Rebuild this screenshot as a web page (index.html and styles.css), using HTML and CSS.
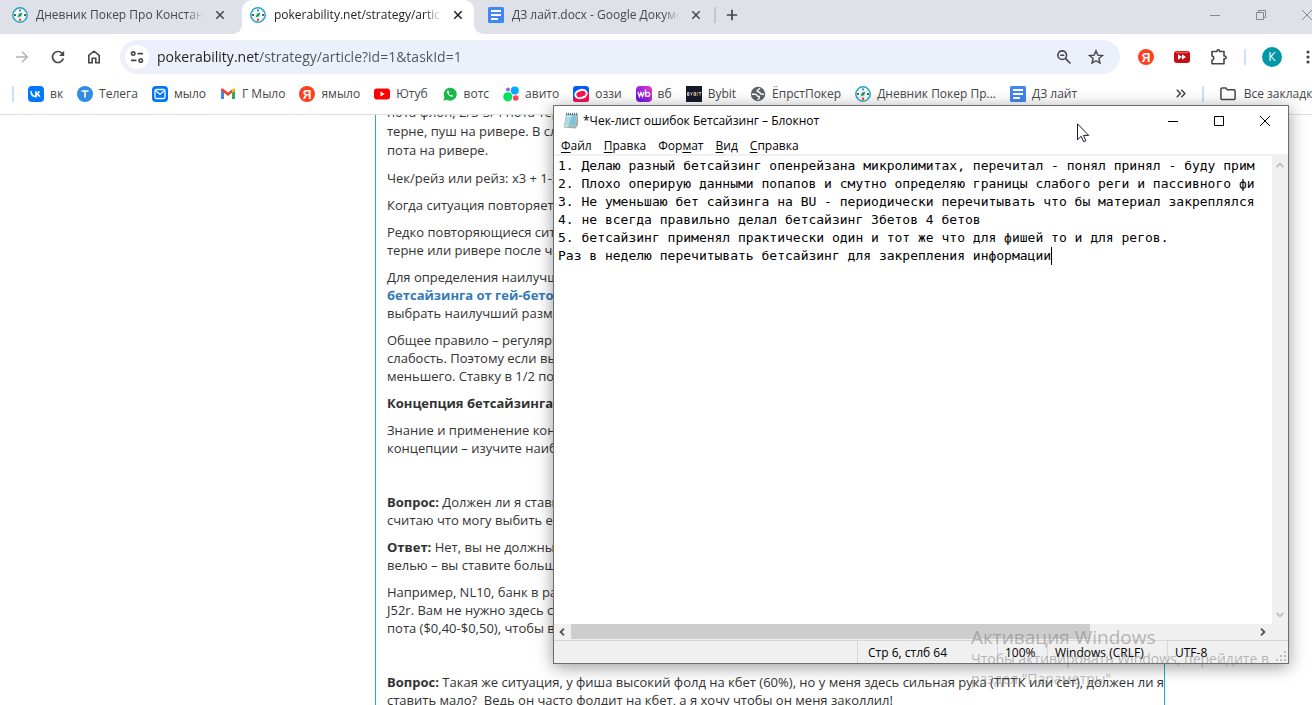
FILE: index.html
```html
<!DOCTYPE html>
<html lang="ru">
<head>
<meta charset="utf-8">
<title>pokerability.net</title>
<link rel="stylesheet" href="styles.css">
</head>
<body>
<svg class="defs" aria-hidden="true">
  <symbol id="i-poker" viewBox="0 0 16 16"><circle cx="8" cy="8" r="7.2" fill="#fff" stroke="#25a5be" stroke-width="1.5"/><path d="M2.200 8h1.600M12.200 8h1.600" stroke="#333" stroke-width="1.8"/><circle cx="8" cy="3.400" r="1.100" fill="#5570d8"/><circle cx="8" cy="12.700" r="1.300" fill="#e8453c"/><path d="M3.600 4.200l1 1M12.400 4.200l-1 1M3.600 11.800l1-1M12.400 11.800l-1-1" stroke="#7cc7d5"/><circle cx="8" cy="8" r="2.800" fill="#c6ecd9"/><path d="M5.600 10.400L7 7l3.400-1.400L9 9z" fill="#1a9a63"/><circle cx="8" cy="8" r=".8" fill="#176"/></symbol>
  <symbol id="i-doc" viewBox="0 0 16 16"><rect width="16" height="16" rx="1.5" fill="#4285f4"/><path d="M3 4h10M3 8h10M3 12h7" stroke="#fff" stroke-width="1.8"/></symbol>
  <symbol id="i-x" viewBox="0 0 10 10"><path d="M1.3 1.3l7.4 7.4M8.7 1.3L1.3 8.7" stroke="currentColor" stroke-width="1.5"/></symbol>
</svg>

<div class="browser">
  <div class="tabstrip">
    <div class="tab"><svg class="fav"><use href="#i-poker"/></svg><span class="tab-title">Дневник Покер Про Константин</span><button class="tab-close" aria-label="Закрыть"><svg width="10" height="10"><use href="#i-x"/></svg></button></div>
    <div class="tab tab-active"><svg class="fav"><use href="#i-poker"/></svg><span class="tab-title">pokerability.net/strategy/article?id=1</span><button class="tab-close" aria-label="Закрыть"><svg width="10" height="10"><use href="#i-x"/></svg></button></div>
    <div class="tab tab-last"><svg class="fav"><use href="#i-doc"/></svg><span class="tab-title">ДЗ лайт.docx - Google Документы</span><button class="tab-close" aria-label="Закрыть"><svg width="10" height="10"><use href="#i-x"/></svg></button></div>
    <button class="new-tab" aria-label="Новая вкладка"><svg width="12" height="12" viewBox="0 0 12 12"><path d="M6 .8v10.4M.8 6h10.4" stroke="#454746" stroke-width="1.7"/></svg></button>
    <div class="win-buttons">
      <button aria-label="Свернуть"><svg width="10" height="10" viewBox="0 0 10 10"><path d="M0 5.5h10" stroke="#858a90"/></svg></button>
      <button aria-label="Восстановить"><svg width="10" height="10" viewBox="0 0 10 10"><path d="M.5 2.5h7v7h-7zM2.500 2.500v-2h7v7h-2" fill="none" stroke="#858a90"/></svg></button>
      <button aria-label="Закрыть окно"><svg width="10" height="10" viewBox="0 0 10 10"><path d="M0 0l10 10M10 0L0 10" stroke="#858a90"/></svg></button>
    </div>
  </div>

  <div class="toolbar">
    <button aria-label="Вперёд"><svg width="16" height="16" viewBox="0 0 16 16"><path d="M2 8h11M8 2.700L13.300 8 8 13.300" fill="none" stroke="#b0b2b5" stroke-width="1.500"/></svg></button>
    <button aria-label="Обновить"><svg width="16" height="16" viewBox="0 0 16 16"><path d="M13.300 9.500A5.500 5.500 0 1 1 12 4.200L13.500 6" fill="none" stroke="#454746" stroke-width="1.700"/><path d="M14.200 1.800v5.100H9.100z" fill="#454746"/></svg></button>
    <button aria-label="Главная"><svg width="16" height="16" viewBox="0 0 16 16"><path d="M2.800 6.300L8 2.200l5.200 4.100v7.500H9.800V9.200H6.200v4.600H2.800z" fill="none" stroke="#454746" stroke-width="1.600"/></svg></button>
    <div class="omnibox">
      <button class="site-info" aria-label="Сведения о сайте"><svg width="14" height="14" viewBox="0 0 14 14" fill="none" stroke="#454746" stroke-width="1.600"><circle cx="3.200" cy="3.600" r="1.700"/><path d="M7.500 3.600H13M1 10.400h5.500"/><circle cx="10.800" cy="10.400" r="1.700"/></svg></button>
      <input class="url" type="text" aria-label="Адрес" value="pokerability.net/strategy/article?id=1&amp;taskId=1">
      <button aria-label="Масштаб"><svg width="16" height="16" viewBox="0 0 16 16" fill="none" stroke="#454746" stroke-width="1.600"><circle cx="6.200" cy="6.200" r="4.300"/><path d="M9.400 9.400L14.500 14.500M4.200 6.200h4"/></svg></button>
      <button aria-label="В закладки"><svg width="16" height="16" viewBox="0 0 16 16"><path d="M8 1.800l1.800 4.300 4.700.4-3.600 3 1.100 4.600L8 11.700l-4 2.400 1.100-4.600-3.600-3 4.700-.4z" fill="none" stroke="#454746" stroke-width="1.400"/></svg></button>
    </div>
    <button aria-label="Яндекс"><svg width="16" height="16" viewBox="0 0 16 16"><circle cx="8" cy="8" r="8" fill="#fc3f1d"/><text class="ya" x="8" y="12.500" text-anchor="middle">Я</text></svg></button>
    <button aria-label="Ускорение"><svg width="16" height="14" viewBox="0 0 16 14"><rect x="0" y="1" width="16" height="12" rx="3" fill="#c90d16"/><path d="M2 2.500h12" stroke="#ef5a5f" stroke-width="1.500"/><path d="M4 4.200L8 7 4 9.800zM8 4.200L12 7 8 9.800z" fill="#fff"/></svg></button>
    <button aria-label="Расширения"><svg width="18" height="18" viewBox="0 0 18 18"><path d="M3 3.500h5V3a1.300 1.300 0 0 1 2.600 0v.5H15V8h.700a1.400 1.400 0 0 1 0 2.800H15v5H3v-3.600c2.400-.3 2.400-4 0-4.300z" fill="none" stroke="#454746" stroke-width="1.600" stroke-linejoin="round"/></svg></button>
    <span class="sep"></span>
    <button aria-label="Профиль"><span class="avatar">К</span></button>
    <button aria-label="Меню"><svg width="4" height="14" viewBox="0 0 4 14" fill="#454746"><circle cx="2" cy="2" r="1.600"/><circle cx="2" cy="7" r="1.600"/><circle cx="2" cy="12" r="1.600"/></svg></button>
  </div>

  <nav class="bookmarks">
    <span class="sep"></span>
    <a href="#"><svg class="fav" viewBox="0 0 16 16"><rect width="16" height="16" rx="4" fill="#07f"/><path d="M3 5.300c.2 3.300 1.900 5.400 5 5.400V5.300M8 8.200c1.700-.2 2.700-1.200 3.300-2.900M8 8c1.900.2 3.200 1.200 3.700 2.800" fill="none" stroke="#fff" stroke-width="1.700"/></svg>вк</a>
    <a href="#"><svg class="fav" viewBox="0 0 16 16"><circle cx="8" cy="8" r="8" fill="#2f8de4"/><path d="M4.500 5h7M8 5v6.500" stroke="#fff" stroke-width="1.600"/></svg>Телега</a>
    <a href="#"><svg class="fav" viewBox="0 0 16 16"><rect width="16" height="16" rx="4" fill="#07f"/><rect x="3" y="3.500" width="10" height="9" rx="1.500" fill="none" stroke="#fff" stroke-width="1.300"/><path d="M4 5l4 3.500L12 5" fill="none" stroke="#fff" stroke-width="1.300"/></svg>мыло</a>
    <a href="#"><svg class="fav" viewBox="0 0 16 16"><path d="M1 13V4l3 2.200V13z" fill="#4285f4"/><path d="M12 13V6.200L15 4v9z" fill="#34a853"/><path d="M1 4.500V3.600C1 2.600 2.300 2 3.200 2.800L8 6.500l4-3v3.300L8 9.900 4 6.800z" fill="#ea4335"/><path d="M12 3.500l1-.8c1-.7 2 0 2 .9v1L12 7z" fill="#fbbc04"/></svg>Г Мыло</a>
    <a href="#"><svg class="fav" viewBox="0 0 16 16"><circle cx="8" cy="8" r="8" fill="#fc3f1d"/><text class="ya" x="8" y="12.500" text-anchor="middle">Я</text></svg>ямыло</a>
    <a href="#"><svg class="fav" viewBox="0 0 16 16"><rect y="2.500" width="16" height="11" rx="3" fill="#f00"/><path d="M6.500 5.500L10.800 8l-4.300 2.500z" fill="#fff"/></svg>Ютуб</a>
    <a href="#"><svg class="fav" viewBox="0 0 16 16"><path d="M1.500 14.800l1-3.600A6.500 6.500 0 1 1 5 13.800z" fill="#16b848"/><path d="M5.500 4.500c-1 1.500 0 3.500 1.500 4.800 1.700 1.600 3.300 2 4.300.7l-1.600-1.300-1 .8c-.9-.4-1.500-1-2-2l.7-.9-.7-1.900z" fill="#fff"/></svg>вотс</a>
    <a href="#"><svg class="fav" viewBox="0 0 16 16"><circle cx="4.800" cy="10.800" r="4.600" fill="#04e061"/><circle cx="11.800" cy="4.600" r="4" fill="#0af"/><circle cx="5" cy="3.500" r="2" fill="#965eeb"/><circle cx="12.800" cy="12" r="2.800" fill="#ff4053"/></svg>авито</a>
    <a href="#"><svg class="fav" viewBox="0 0 16 16"><rect width="16" height="16" rx="3" fill="#005bff"/><path d="M0 12L16 6v7a3 3 0 0 1-3 3H3a3 3 0 0 1-3-3z" fill="#f91155"/><ellipse cx="8" cy="8" rx="6.800" ry="5" fill="#fff" transform="rotate(-15 8 8)"/><ellipse cx="8" cy="8" rx="4.800" ry="2.900" fill="#f91155" transform="rotate(-15 8 8)"/></svg>оззи</a>
    <a href="#"><svg class="fav" viewBox="0 0 16 16"><linearGradient id="wb" x1="1" y1="0" x2="0" y2="1"><stop stop-color="#ed3cca"/><stop offset="1" stop-color="#5b0fe8"/></linearGradient><rect width="16" height="16" rx="4" fill="url(#wb)"/><path d="M2 6l1.500 4.500L5 6.500l1.500 4L8 6M9.500 3.500v7" fill="none" stroke="#fff" stroke-width="1.300"/><circle cx="11.600" cy="8.400" r="2" fill="none" stroke="#fff" stroke-width="1.300"/></svg>вб</a>
    <a href="#"><svg class="fav" viewBox="0 0 16 16"><rect width="16" height="16" fill="#15192a"/><path d="M1.500 6.500h1.500v3H1.500zM1.500 8H3M4.500 6.500l1 1.500 1-1.500M5.500 8v1.500M8 6.500h1.500v3H8zM12.500 6.500h3M14 6.500v3" fill="none" stroke="#ddd" stroke-width=".8"/><path d="M11.200 6v4" stroke="#f7a600" stroke-width=".9"/></svg>Bybit</a>
    <a href="#"><svg class="fav" viewBox="0 0 16 16"><circle cx="8" cy="8" r="7.200" fill="#5f6368"/><path d="M1.800 8.200h3.700c1.500 0 1 2.300 2.700 2.300h1v1.600c0 .9-1.200.9-1.200 2M9.500 2.200c.3 1.600-2.300 1.200-2.300 2.700 0 1.300 3 .8 3 2.300 0 1 1.500 1 3.600 1" fill="none" stroke="#fff" stroke-width="1.500"/></svg>ЁпрстПокер</a>
    <a href="#"><svg class="fav"><use href="#i-poker"/></svg>Дневник Покер Пр...</a>
    <a href="#"><svg class="fav"><use href="#i-doc"/></svg>ДЗ лайт</a>
    <div class="bookmarks-end">
      <button aria-label="Ещё закладки"><svg width="10" height="9" viewBox="0 0 10 9"><path d="M.8.8l3.600 3.700L.8 8.200M5.300.8l3.600 3.700-3.600 3.700" fill="none" stroke="#454746" stroke-width="1.500"/></svg></button>
      <span class="sep"></span>
      <a href="#"><svg width="16" height="14" viewBox="0 0 16 14"><path d="M.9 2.200c0-.7.500-1.200 1.200-1.200h3.700l1.500 1.700h6.600c.7 0 1.200.5 1.200 1.200v7.300c0 .7-.5 1.200-1.200 1.200H2.100c-.7 0-1.200-.5-1.200-1.200z" fill="none" stroke="#454746" stroke-width="1.500"/></svg>Все закладки</a>
    </div>
  </nav>

  <main class="page">
    <article class="article">
      <p class="lead">пота флоп, 2/3-3/4 пота терн<br>терне, пуш на ривере. В случае<br>пота на ривере.</p>
      <p>Чек/рейз или рейз: х3 + 1-3</p>
      <p>Когда ситуация повторяется</p>
      <p>Редко повторяющиеся ситуации<br>терне или ривере после чека</p>
      <p>Для определения наилучшего<br><a href="#">бетсайзинга от гей-бетов до</a><br>выбрать наилучший размер</p>
      <p>Общее правило – регулярно<br>слабость. Поэтому если вы<br>меньшего. Ставку в 1/2 пота</p>
      <p><strong>Концепция бетсайзинга в в</strong></p>
      <p>Знание и применение концепции<br>концепции – изучите наиболее</p>
      <p>&nbsp;</p>
      <p><strong>Вопрос:</strong> Должен ли я ставить<br>считаю что могу выбить его</p>
      <p><strong>Ответ:</strong> Нет, вы не должны п<br>велью – вы ставите большие</p>
      <p>Например, NL10, банк в раз<br>J52r. Вам не нужно здесь ст<br>пота ($0,40-$0,50), чтобы вы</p>
      <p>&nbsp;</p>
      <p><strong>Вопрос:</strong> Такая же ситуация, у фиша высокий фолд на кбет (60%), но у меня здесь сильная рука (ТПТК или сет), должен ли я<br>ставить мало?&nbsp; Ведь он часто фолдит на кбет, а я хочу чтобы он меня заколлил!</p>
    </article>
  </main>
</div>

<section class="notepad">
  <header class="np-title">
    <svg width="16" height="17" viewBox="0 0 16 17"><path d="M3.500 2.500L15 2v11l-2.500 3.500L1 15.500z" fill="#b5a98e"/><path d="M3 2h11.500l-1.700 13H.8z" fill="#8fc9d9"/><path d="M3.500 3.500H9L5 14.500H1.500z" fill="#c9ecf3"/><path d="M3 6h10M2.700 8h10M2.500 10h10M2.200 12h10" stroke="#6fb0c4" stroke-width=".6"/><path d="M3.500.8v2.400M5.500.8v2.400M7.500.8v2.400M9.500.8v2.400M11.500.8v2.400M13.500.8v2.400" stroke="#4c6670" stroke-width=".9"/></svg>
    <h1>*Чек-лист ошибок Бетсайзинг – Блокнот</h1>
    <button aria-label="Свернуть"><svg width="10" height="10" viewBox="0 0 10 10"><path d="M0 5.500h10" stroke="#000"/></svg></button>
    <button aria-label="Развернуть"><svg width="10" height="10" viewBox="0 0 10 10"><path d="M.5.500h9v9h-9z" fill="none" stroke="#000"/></svg></button>
    <button aria-label="Закрыть"><svg width="10" height="10" viewBox="0 0 10 10"><path d="M0 0l10 10M10 0L0 10" stroke="#000"/></svg></button>
  </header>
  <div class="np-menu"><button><u>Ф</u>айл</button><button><u>П</u>равка</button><button>Фор<u>м</u>ат</button><button><u>В</u>ид</button><button><u>С</u>правка</button></div>
  <div class="np-body">
    <div class="np-edit">
      <textarea class="np-text" aria-label="Текст" wrap="off" spellcheck="false">1. Делаю разный бетсайзинг опенрейзана микролимитах, перечитал - понял принял - буду прим
2. Плохо оперирую данными попапов и смутно определяю границы слабого реги и пассивного фи
3. Не уменьшаю бет сайзинга на BU - периодически перечитывать что бы материал закреплялся
4. не всегда правильно делал бетсайзинг 3бетов 4 бетов
5. бетсайзинг применял практически один и тот же что для фишей то и для регов.
Раз в неделю перечитывать бетсайзинг для закрепления информации</textarea>
      <span class="caret"></span>
    </div>
    <div class="vscroll">
      <svg width="8" height="6" viewBox="0 0 8 6"><path d="M.7 5L4 1.600 7.300 5" fill="none" stroke="#bfbfbf" stroke-width="1.800"/></svg>
      <svg width="8" height="6" viewBox="0 0 8 6"><path d="M.7 1L4 4.400 7.300 1" fill="none" stroke="#bfbfbf" stroke-width="1.800"/></svg>
    </div>
  </div>
  <div class="hscroll">
    <svg width="6" height="8" viewBox="0 0 6 8"><path d="M5 .7L1.600 4 5 7.300" fill="none" stroke="#505050" stroke-width="1.800"/></svg>
    <span class="track"><span class="thumb"></span></span>
    <svg width="6" height="8" viewBox="0 0 6 8"><path d="M1 .7L4.400 4 1 7.300" fill="none" stroke="#505050" stroke-width="1.800"/></svg>
  </div>
  <footer class="np-status">
    <span>Стр 6, стлб 64</span><span>100%</span><span>Windows (CRLF)</span><span>UTF-8</span>
    <svg class="grip" width="10" height="10" viewBox="0 0 10 10"><path d="M8 0h2v2H8zM4 4h2v2H4zM8 4h2v2H8zM0 8h2v2H0zM4 8h2v2H4zM8 8h2v2H8z" fill="#bfbfbf"/></svg>
  </footer>
</section>

<aside class="watermark">
  <h2>Активация Windows</h2>
  <p>Чтобы активировать Windows, перейдите в раздел "Параметры".</p>
</aside>

<svg class="pointer" width="13" height="20" viewBox="0 0 13 20"><path d="M.5.800v16l3.700-3.500 2.400 5.400 2.300-1-2.400-5.300h5.200z" fill="#fff" stroke="#1a1a2a"/></svg>
</body>
</html>
```

FILE: styles.css
```css
* { box-sizing: border-box; }
body {
  margin: 0;
  position: relative;
  height: 100vh;
  overflow: hidden;
  background: #fff;
  color: #333;
  font: 12px/16px "Open Sans", "Noto Sans", sans-serif;
}
button {
  display: flex;
  align-items: center;
  justify-content: center;
  flex: none;
  padding: 0;
  border: 0;
  background: none;
  color: inherit;
  font: inherit;
}
svg { flex: none; display: block; }
.defs { position: absolute; width: 0; height: 0; }
.fav { width: 16px; height: 16px; }
.ya { font: bold 12px "Liberation Sans", sans-serif; fill: #fff; }
.browser { display: flex; flex-direction: column; height: 100%; overflow: hidden; }

/* Tab strip */
.tabstrip { display: flex; flex: none; height: 34px; background: #dee1e8; overflow: hidden; color: #45474a; }
.tab { position: relative; display: flex; align-items: center; width: 242px; height: 29px; padding: 0 13px 0 12px; gap: 8px; }
.tab-title {
  flex: 1;
  min-width: 0;
  overflow: hidden;
  white-space: nowrap;
  -webkit-mask-image: linear-gradient(90deg, #000 calc(100% - 16px), transparent);
  mask-image: linear-gradient(90deg, #000 calc(100% - 16px), transparent);
}
.tab-close { width: 18px; height: 18px; }
.tab-active { width: 232px; height: 34px; padding: 0 7px 5px 8px; background: #fff; border-radius: 10px 10px 0 0; color: #1f1f1f; }
.tab-active::before, .tab-active::after { content: ""; position: absolute; bottom: 0; width: 10px; height: 10px; }
.tab-active::before { right: 100%; background: radial-gradient(circle at 0 0, transparent 10px, #fff 10px); }
.tab-active::after { left: 100%; background: radial-gradient(circle at 100% 0, transparent 10px, #fff 10px); }
.tab-last { padding: 0 11px 0 14px; }
.tab-last::after { content: ""; position: absolute; right: 0; width: 2px; height: 16px; background: #c3c6cc; }
.new-tab { width: 32px; height: 29px; }
.win-buttons { display: flex; height: 29px; margin: 0 -18px 0 auto; }
.win-buttons button { width: 46px; }

/* Toolbar */
.toolbar { display: flex; align-items: center; flex: none; height: 46px; padding-left: 4px; margin-right: -14px; }
.toolbar button { width: 36px; height: 34px; }
.omnibox { display: flex; align-items: center; flex: 1; min-width: 0; height: 34px; margin: 0 8px; padding: 0 8px 0 5px; border-radius: 17px; background: #ecf0fa; }
.omnibox button { width: 32px; }
.toolbar .site-info { width: 24px; height: 24px; border-radius: 12px; background: #fff; }
.url {
  flex: 1;
  min-width: 0;
  padding: 0 8px;
  border: 0;
  outline: 0;
  font: 14px/20px "Open Sans", sans-serif;
  background: linear-gradient(90deg, #1f1f1f 110px, #505356 110px);
  -webkit-background-clip: text;
  background-clip: text;
  -webkit-text-fill-color: transparent;
}
.sep { flex: none; width: 2px; height: 16px; background: #d0e0fb; }
.toolbar .sep { margin: 0 8px; }
.avatar { width: 20px; height: 20px; border-radius: 10px; background: #0097a7; color: #fff; line-height: 20px; }

/* Bookmarks bar */
.bookmarks { display: flex; align-items: center; flex: none; gap: 14px; height: 35px; padding: 0 0 7px 12px; border-bottom: 1px solid #dcdee1; white-space: nowrap; overflow: hidden; }
.bookmarks a { display: flex; align-items: center; gap: 6px; flex: none; color: #45474a; text-decoration: none; }
.bookmarks-end { display: flex; align-items: center; flex: none; margin: 0 -8px 0 auto; gap: 16px; }
.bookmarks-end a { gap: 8px; }

/* Article */
.page { flex: 1; min-height: 0; overflow: hidden; padding: 0 147px 0 375px; }
.article { display: flow-root; height: 100%; padding-left: 11px; border: solid #20aecb; border-width: 0 1px; font-size: 13px; line-height: 18px; white-space: nowrap; }
.article p { margin: 0 0 9px; }
.article .lead { margin-top: -12px; line-height: 19px; }
.article a { color: #337ab7; font-weight: bold; text-decoration: none; }

/* Notepad window */
.notepad {
  position: absolute;
  left: 553px;
  right: 23px;
  top: 105px;
  bottom: 41px;
  display: flex;
  flex-direction: column;
  border: 1px solid #6b6d70;
  background: #fff;
  color: #000;
  box-shadow: 0 3px 16px rgba(0, 0, 0, .4);
}
.np-title { display: flex; align-items: center; flex: none; height: 29px; padding-left: 9px; gap: 4px; }
.np-title h1 { flex: 1; margin: 0; font-size: 12px; font-weight: normal; white-space: nowrap; }
.np-title button { width: 42px; height: 29px; }
.np-title button:last-child { margin-right: 2px; }
.np-menu { display: flex; flex: none; height: 21px; padding: 2px 0 0 7px; gap: 12px; border-bottom: 2px solid #f0f0f0; }
.np-menu u { text-underline-offset: 2px; }
.np-body { display: flex; flex: 1; min-height: 0; }
.np-edit { position: relative; flex: 1; min-width: 0; margin: 1px 4px 0; overflow: hidden; font: 13px/18px "DejaVu Sans Mono", monospace; }
.np-text { display: block; width: 100%; height: 100%; padding: 0; border: 0; outline: 0; resize: none; overflow: hidden; white-space: pre; color: #000; font: inherit; }
.caret { position: absolute; left: 63ch; top: 90px; width: 1px; height: 18px; background: #000; }
.vscroll { display: flex; flex-direction: column; justify-content: space-between; align-items: center; width: 16px; padding: 6px 0; background: #f0f0f0; }
.hscroll { display: flex; align-items: center; flex: none; height: 16px; padding: 0 22px 0 5px; gap: 6px; background: #f0f0f0; }
.track { flex: 1; height: 16px; }
.thumb { display: block; width: 76%; height: 15px; background: #cdcdcd; }
.np-status { position: relative; display: flex; flex: none; justify-content: flex-end; height: 23px; padding-right: 1px; border-top: 1px solid #d7d7d7; background: #f0f0f0; line-height: 23px; }
.np-status span { width: 140px; padding-left: 10px; border-left: 1px solid #d7d7d7; white-space: nowrap; }
.np-status span:nth-child(n+2) { width: 50px; padding-left: 7px; }
.np-status span:nth-child(n+3) { width: 120px; }
.grip { position: absolute; right: 2px; bottom: 2px; }

/* Overlays */
.watermark { position: absolute; left: 971px; right: 23px; top: 625px; color: rgba(120, 120, 120, .5); }
.watermark h2 { margin: 0; font-size: 19px; line-height: 24px; font-weight: normal; white-space: nowrap; }
.watermark p { margin: 0; font-size: 14px; line-height: 20px; }
.pointer { position: absolute; left: 1077px; top: 123px; }
```
